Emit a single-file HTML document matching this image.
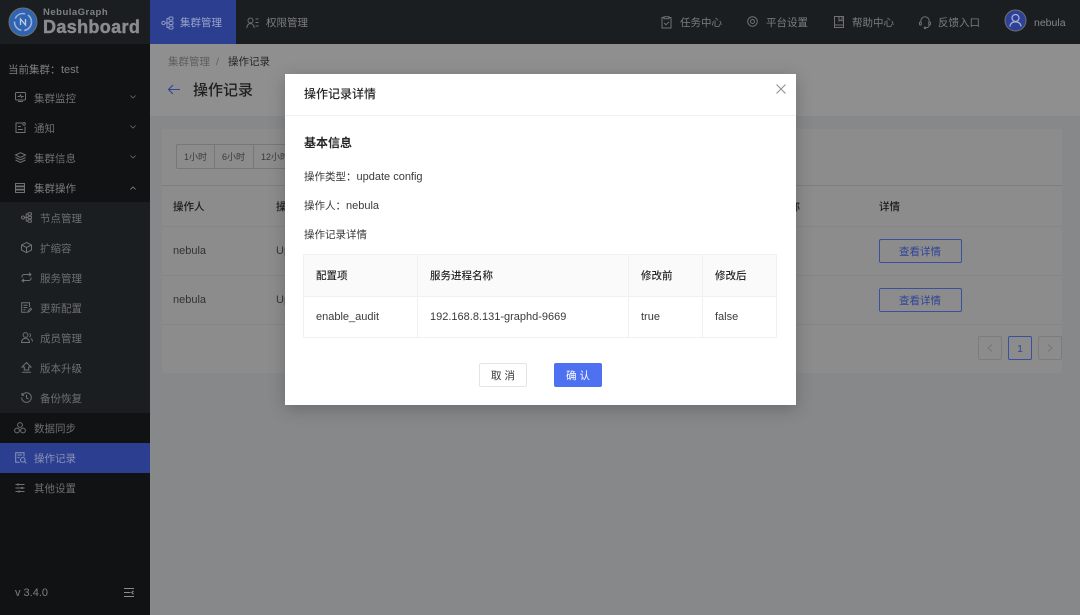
<!DOCTYPE html>
<html lang="zh">
<head>
<meta charset="utf-8">
<title>操作记录</title>
<style>
html,body{margin:0;padding:0;width:1080px;height:615px;overflow:hidden;background:#86888a}
#r{position:absolute;left:0;top:0;width:1080px;height:615px;overflow:hidden;background:#86888a;filter:blur(.35px);font-family:"Liberation Sans","Noto Sans CJK SC",sans-serif;font-size:10.5px}
.b{position:absolute}
.t{position:absolute;white-space:nowrap;line-height:14px;height:14px;margin-top:1px}
.n{margin-top:0}
.l{font-size:11px}
svg{position:absolute;overflow:visible;fill:none}
.nav{color:#7b7d7e}
.nav svg,.side svg{stroke:#6f7172;stroke-width:1}
.side .t{color:#6d6f70}
.bg .t{color:#2a2a2a}
.m .t{color:#3a3a3a}
</style>
</head>
<body>
<div id="r">

<div class="bg">
<div class="b" style="left:150px;top:44px;width:930px;height:72px;background:#8f8f8f"></div>
<div class="t" style="left:168px;top:54px;color:#5e5e5e">集群管理</div>
<div class="t" style="left:216px;top:54px;color:#5e5e5e">/</div>
<div class="t" style="left:228px;top:54px;color:#262626">操作记录</div>
<svg style="left:167px;top:83px" width="14" height="14" viewBox="0 0 14 14"><path d="M13 6.500H1.500M6 2 1.500 6.500 6 11" stroke="#2f4597" stroke-width="1.100"/></svg>
<div class="t" style="left:193px;top:83px;font-size:15px;font-weight:500;color:#1f1f1f">操作记录</div>

<div class="b" style="left:162px;top:129px;width:900px;height:244px;background:#8c8c8c"></div>
<div class="b" style="left:176px;top:144px;width:120px;height:25px;border:1px solid #777;border-radius:2px;box-sizing:border-box"></div>
<div class="b" style="left:214px;top:144px;width:1px;height:25px;background:#777"></div>
<div class="b" style="left:253px;top:144px;width:1px;height:25px;background:#777"></div>
<div class="t n" style="left:184px;top:150px;font-size:9px;color:#3a3a3a">1小时</div>
<div class="t n" style="left:222px;top:150px;font-size:9px;color:#3a3a3a">6小时</div>
<div class="t n" style="left:261px;top:150px;font-size:9px;color:#3a3a3a">12小时</div>
<div class="b" style="left:162px;top:185px;width:900px;height:1px;background:#7e7e7e"></div>
<div class="b" style="left:162px;top:226px;width:900px;height:1px;background:#858585"></div>
<div class="b" style="left:162px;top:275px;width:900px;height:1px;background:#858585"></div>
<div class="b" style="left:162px;top:324px;width:900px;height:1px;background:#858585"></div>
<div class="t" style="left:173px;top:199px;font-weight:500;color:#1c1c1c">操作人</div>
<div class="t" style="left:276px;top:199px;font-weight:500;color:#1c1c1c">操作类型</div>
<div class="t l" style="left:173px;top:243px;color:#333">nebula</div>
<div class="t l" style="left:276px;top:243px;color:#333">Update</div>
<div class="t l" style="left:173px;top:292px;color:#333">nebula</div>
<div class="t l" style="left:276px;top:292px;color:#333">Update</div>
<div class="t" style="left:879px;top:199px;font-weight:500;color:#1c1c1c">详情</div>
<div class="t" style="left:779px;top:199px;font-weight:500;color:#1c1c1c">名称</div>
<div class="b" style="left:879px;top:239px;width:83px;height:24px;box-sizing:border-box;border:1px solid #3b4f9f;border-radius:2px"></div>
<div class="t" style="left:899px;top:244px;color:#2f4597">查看详情</div>
<div class="b" style="left:879px;top:288px;width:83px;height:24px;box-sizing:border-box;border:1px solid #3b4f9f;border-radius:2px"></div>
<div class="t" style="left:899px;top:293px;color:#2f4597">查看详情</div>
<div class="b" style="left:978px;top:336px;width:24px;height:24px;box-sizing:border-box;border:1px solid #7c7c7c;border-radius:2px"></div>
<svg style="left:987px;top:344px" width="6" height="8" viewBox="0 0 6 8"><path d="M5 .5 1 4l4 3.500" stroke="#747474"/></svg>
<div class="b" style="left:1008px;top:336px;width:24px;height:24px;box-sizing:border-box;border:1px solid #3b4f9f;border-radius:2px"></div>
<div class="t" style="left:1008px;top:341px;width:24px;text-align:center;color:#2f4597">1</div>
<div class="b" style="left:1038px;top:336px;width:24px;height:24px;box-sizing:border-box;border:1px solid #7c7c7c;border-radius:2px"></div>
<svg style="left:1047px;top:344px" width="6" height="8" viewBox="0 0 6 8"><path d="M1 .5 5 4 1 7.500" stroke="#747474"/></svg>
</div>

<div class="nav">
<div class="b" style="left:0;top:0;width:1080px;height:44px;background:#1a1e20"></div>
<div class="b" style="left:150px;top:0;width:86px;height:44px;background:#2c3e90"></div>

<svg style="left:9px;top:8px" width="28" height="28" viewBox="0 0 28 28"><circle cx="14" cy="14" r="14" fill="#2e64b2"/><circle cx="14" cy="14" r="8.500" stroke="#9db2d2" stroke-width="1.600" stroke-dasharray="12 3"/><path d="M11.500 17v-6l5 6v-6" stroke="#c2cde0" stroke-width="1.300"/></svg>
<div class="t n" style="left:43px;top:6px;font-size:9.5px;font-weight:700;letter-spacing:.5px;color:#808284">NebulaGraph</div>
<div class="t n" style="left:43px;top:19px;height:16px;line-height:16px;font-size:18px;font-weight:700;letter-spacing:.35px;color:#8a8b8c;-webkit-text-stroke:.45px #8a8b8c">Dashboard</div>

<svg style="left:161px;top:16px;stroke:#8d99c4" width="13" height="14" viewBox="0 0 13 14"><circle cx="2.500" cy="7" r="1.700"/><path d="M4.200 7H8M6 7V2.500h2M6 7v4.500h2"/><rect x="8" y="1" width="4" height="3" rx="1"/><rect x="8" y="5.500" width="4" height="3" rx="1"/><rect x="8" y="10" width="4" height="3" rx="1"/></svg>
<div class="t" style="left:180px;top:15px;color:#97a2c8">集群管理</div>
<svg style="left:246px;top:17px" width="13" height="12" viewBox="0 0 13 12"><circle cx="4.500" cy="3.500" r="2.500"/><path d="M.8 11c.4-3 2-4.500 3.700-4.500S7.900 8 8.200 11M9.500 2H12.500M9.500 5.500H12.500M9.500 9H12.500"/></svg>
<div class="t" style="left:266px;top:15px">权限管理</div>

<svg style="left:661px;top:16px" width="11" height="13" viewBox="0 0 11 13"><path d="M3 1.500H1v10.500h9V1.500H8M3 .7h5v2H3zM3.200 7l1.800 1.800L8 5.800"/></svg>
<div class="t" style="left:680px;top:15px">任务中心</div>
<svg style="left:747px;top:16px" width="11" height="11" viewBox="0 0 11 11"><circle cx="5.500" cy="5.500" r="4.800"/><circle cx="5.500" cy="5.500" r="2"/></svg>
<div class="t" style="left:766px;top:15px">平台设置</div>
<svg style="left:834px;top:16px" width="10" height="12" viewBox="0 0 10 12"><path d="M.5.500h9v11H.5zM.5 9h9M5 .500v4.500l1.500-1 1.500 1V.5"/></svg>
<div class="t" style="left:852px;top:15px">帮助中心</div>
<svg style="left:919px;top:16px" width="12" height="13" viewBox="0 0 12 13"><path d="M1.800 6.500V5a4.200 4.200 0 0 1 8.400 0v1.500M10.200 9c0 1.800-1.500 2.800-3.400 2.800"/><rect x=".5" y="6" width="1.800" height="3" rx=".9"/><rect x="9.700" y="6" width="1.800" height="3" rx=".9"/><circle cx="6" cy="11.800" r=".8"/></svg>
<div class="t" style="left:938px;top:15px">反馈入口</div>
<svg style="left:1005px;top:10px" width="22" height="22" viewBox="0 0 22 22"><circle cx="10.500" cy="10.500" r="10.500" fill="#2f4197"/><circle cx="10.500" cy="8" r="3.500" stroke="#a4aed4" stroke-width="1.300"/><path d="M4.800 16.500c.6-3 2.800-4.700 5.700-4.700s5.100 1.700 5.700 4.700" stroke="#a4aed4" stroke-width="1.300"/></svg>
<div class="t" style="left:1034px;top:15px;color:#85878a">nebula</div>
</div>

<div class="side">
<div class="b" style="left:0;top:44px;width:150px;height:571px;background:#111214"></div>
<div class="b" style="left:0;top:202px;width:150px;height:211px;background:#1a1e20"></div>
<div class="b" style="left:0;top:443px;width:150px;height:30px;background:#2c3e90"></div>
<div class="t" style="left:8px;top:62px;color:#7f8081">当前集群：</div>
<div class="t l" style="left:61px;top:62px;color:#7f8081">test</div>

<svg style="left:15px;top:92px" width="11" height="10" viewBox="0 0 11 10"><rect x=".5" y=".5" width="10" height="7.500" rx="1"/><path d="M2.500 4.500h2l1-1.500 1 2.500 .7-1h1.500M3 9.500h5"/></svg>
<div class="t" style="left:34px;top:91px">集群监控</div>
<svg style="left:130px;top:95px" width="6" height="4" viewBox="0 0 8 5"><path d="M.5.500 4 4 7.500.5"/></svg>

<svg style="left:15px;top:122px" width="11" height="11" viewBox="0 0 11 11"><path d="M7 1H1v9.500h9V4.500M3 4.500h3M3 7.500h5"/><circle cx="9" cy="1.800" r="1.300"/></svg>
<div class="t" style="left:34px;top:121px">通知</div>
<svg style="left:130px;top:125px" width="6" height="4" viewBox="0 0 8 5"><path d="M.5.500 4 4 7.500.5"/></svg>

<svg style="left:15px;top:152px" width="11" height="11" viewBox="0 0 11 11"><path d="M5.500.700 10.500 3 5.500 5.500.5 3zM.5 5.500l5 2.500 5-2.500M.5 8l5 2.500 5-2.500"/></svg>
<div class="t" style="left:34px;top:151px">集群信息</div>
<svg style="left:130px;top:155px" width="6" height="4" viewBox="0 0 8 5"><path d="M.5.500 4 4 7.500.5"/></svg>

<svg style="left:15px;top:183px" width="10" height="10" viewBox="0 0 10 10"><path d="M.5.500h9v2.500h-9zM.5 3.700h9v2.500h-9zM.5 7h9v2.500h-9z"/></svg>
<div class="t" style="left:34px;top:181px;color:#797b7c">集群操作</div>
<svg style="left:130px;top:186px" width="6" height="4" viewBox="0 0 8 5"><path d="M.5 4.500 4 1l3.500 3.500" stroke="#909192"/></svg>

<svg style="left:21px;top:212px" width="11" height="11" viewBox="0 0 11 11"><circle cx="2" cy="5.500" r="1.500"/><path d="M3.500 5.500H7M5.200 5.500V2H7M5.200 5.500V9H7"/><rect x="7" y=".8" width="3.500" height="2.400" rx="1"/><rect x="7" y="4.300" width="3.500" height="2.400" rx="1"/><rect x="7" y="7.800" width="3.500" height="2.400" rx="1"/></svg>
<div class="t" style="left:40px;top:211px">节点管理</div>

<svg style="left:21px;top:242px" width="11" height="11" viewBox="0 0 11 11"><path d="M5.500.500 10.500 3v5l-5 2.700L.5 8V3zM.5 3l5 2.500L10.500 3M5.500 5.500v5.200"/></svg>
<div class="t" style="left:40px;top:241px">扩缩容</div>

<svg style="left:21px;top:272px" width="11" height="11" viewBox="0 0 11 11"><path d="M10 2.500H3A2 2 0 0 0 1 4.500v1M8 .8 10 2.500 8 4.200M1 8.500h7a2 2 0 0 0 2-2v-1M3 6.800 1 8.500l2 1.700"/></svg>
<div class="t" style="left:40px;top:271px">服务管理</div>

<svg style="left:21px;top:302px" width="11" height="11" viewBox="0 0 11 11"><path d="M8.500 5V.7H.7v9.600h5M2.500 3.200h4M2.500 5.500h4M2.500 7.800h2M6.800 10.200l.3-1.500 2.500-2.500 1 1-2.500 2.500z"/></svg>
<div class="t" style="left:40px;top:301px">更新配置</div>

<svg style="left:21px;top:332px" width="12" height="11" viewBox="0 0 12 11"><circle cx="4.500" cy="3" r="2.400"/><path d="M.5 10.500c0-2.700 1.800-4.300 4-4.300s4 1.600 4 4.300zM8.500 1.500a2 2 0 0 1 0 3.500M9.800 6.500c1 .6 1.700 1.800 1.700 3"/></svg>
<div class="t" style="left:40px;top:331px">成员管理</div>

<svg style="left:21px;top:362px" width="11" height="11" viewBox="0 0 11 11"><path d="M5.500.500 10 5H7.700v3H3.300V5H1zM1 10.300h9"/></svg>
<div class="t" style="left:40px;top:361px">版本升级</div>

<svg style="left:21px;top:392px" width="11" height="11" viewBox="0 0 11 11"><path d="M1.300 3.200A4.800 4.800 0 1 1 .7 5.500M1 1v2.300h2.300M5.500 2.800v3l2 1.200"/></svg>
<div class="t" style="left:40px;top:391px">备份恢复</div>

<svg style="left:14px;top:422px" width="12" height="12" viewBox="0 0 12 12"><circle cx="6" cy="3" r="2.400"/><circle cx="3" cy="8.500" r="2.400"/><circle cx="9" cy="8.500" r="2.400"/></svg>
<div class="t" style="left:34px;top:421px">数据同步</div>

<svg style="left:15px;top:452px;stroke:#8a93b5" width="12" height="12" viewBox="0 0 12 12"><path d="M9 4.500V.7H.7v9.600h4M2.500 3h4.500M2.500 5.500h2"/><circle cx="7.800" cy="7.800" r="2.300"/><path d="M9.500 9.500l1.800 1.800"/></svg>
<div class="t" style="left:34px;top:451px;color:#8a93b5">操作记录</div>

<svg style="left:15px;top:483px" width="10" height="10" viewBox="0 0 10 10"><path d="M.5 1.500h9M.5 5h9M.5 8.500h9"/><path d="M3 .5v2M7 4v2M4 7.500v2" stroke-width="1.500"/></svg>
<div class="t" style="left:34px;top:481px">其他设置</div>

<div class="t l" style="left:15px;top:585px;color:#7f8081">v 3.4.0</div>
<svg style="left:124px;top:588px;stroke:#8b8c8d" width="10" height="9" viewBox="0 0 10 9"><path d="M0 .5h10M0 4.500h6.500M0 8.500h10M9.500 2.800 7.800 4.500l1.700 1.700" stroke-width="1.100"/></svg>
</div>

<div class="m">
<div class="b" style="left:285px;top:74px;width:511px;height:331px;background:#fff;box-shadow:0 4px 16px rgba(0,0,0,.22)"></div>
<div class="b" style="left:285px;top:115px;width:511px;height:1px;background:#f0f0f0"></div>
<div class="t n" style="left:304px;top:87px;font-size:12px;font-weight:500;color:#262626">操作记录详情</div>
<svg style="left:776px;top:84px" width="10" height="10" viewBox="0 0 10 10"><path d="M.5.500l9 9M9.500.500l-9 9" stroke="#8c8c8c"/></svg>
<div class="t n" style="left:304px;top:136px;font-size:12px;font-weight:700;color:#262626">基本信息</div>
<div class="t" style="left:304px;top:169px">操作类型：<span class="l">update config</span></div>
<div class="t" style="left:304px;top:198px">操作人：<span class="l">nebula</span></div>
<div class="t" style="left:304px;top:227px">操作记录详情</div>

<div class="b" style="left:303px;top:254px;width:474px;height:42px;background:#fafafa"></div>
<div class="b" style="left:303px;top:254px;width:474px;height:84px;box-sizing:border-box;border:1px solid #f0f0f0"></div>
<div class="b" style="left:303px;top:296px;width:474px;height:1px;background:#f0f0f0"></div>
<div class="b" style="left:417px;top:254px;width:1px;height:84px;background:#f0f0f0"></div>
<div class="b" style="left:628px;top:254px;width:1px;height:84px;background:#f0f0f0"></div>
<div class="b" style="left:702px;top:254px;width:1px;height:84px;background:#f0f0f0"></div>
<div class="t" style="left:316px;top:268px;font-weight:500;color:#262626">配置项</div>
<div class="t" style="left:430px;top:268px;font-weight:500;color:#262626">服务进程名称</div>
<div class="t" style="left:641px;top:268px;font-weight:500;color:#262626">修改前</div>
<div class="t" style="left:715px;top:268px;font-weight:500;color:#262626">修改后</div>
<div class="t l" style="left:316px;top:309px">enable_audit</div>
<div class="t l" style="left:430px;top:309px">192.168.8.131-graphd-9669</div>
<div class="t l" style="left:641px;top:309px">true</div>
<div class="t l" style="left:715px;top:309px">false</div>

<div class="b" style="left:479px;top:363px;width:48px;height:24px;box-sizing:border-box;border:1px solid #e4e4e4;border-radius:2px;background:#fff"></div>
<div class="t" style="left:479px;top:368px;width:48px;text-align:center;color:#333">取 消</div>
<div class="b" style="left:554px;top:363px;width:48px;height:24px;background:#4e71f2;border-radius:2px"></div>
<div class="t" style="left:554px;top:368px;width:48px;text-align:center;color:#fff">确 认</div>
</div>

</div>
</body>
</html>
